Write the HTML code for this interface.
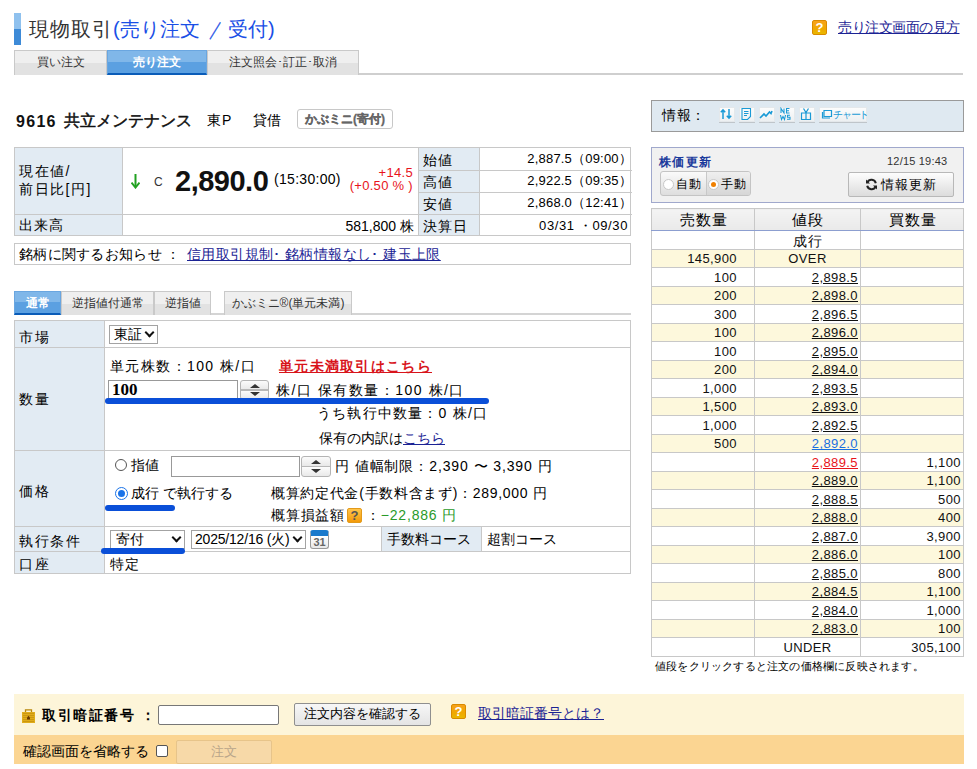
<!DOCTYPE html>
<html lang="ja"><head><meta charset="utf-8">
<style>
*{box-sizing:border-box}
html,body{margin:0;padding:0;background:#fff;width:977px;height:769px;overflow:hidden}
body{font-family:"Liberation Sans",sans-serif;font-size:13px;color:#000;position:relative}
.abs{position:absolute}
a{color:#1b2394;text-decoration:underline}
.titlebar{left:14px;top:13px;width:7px;height:32px;background:linear-gradient(#8fc1ee 0,#8fc1ee 50%,#3d8ad7 50%,#3d8ad7 100%)}
.title{left:29px;top:14px;font-size:20px;line-height:30px;color:#333;white-space:nowrap;letter-spacing:1px}
.title span{color:#1a4fe6}
.tabs{left:14px;top:50px;height:25px}
.tab{position:absolute;top:0;height:25px;border:1px solid #c9c9c9;border-bottom:none;background:linear-gradient(#efefef 0,#efefef 50%,#e2e2e2 50%,#e2e2e2 100%);font-size:12px;text-align:center;line-height:23px;color:#333}
.tabline{left:14px;top:73px;width:949px;height:2px;background:#cfcfcf}

.stock{left:16px;top:112px;font-size:16px;font-weight:bold;color:#111;white-space:nowrap;line-height:20px;letter-spacing:1.3px}
.stock.n{font-size:16px;letter-spacing:0;font-weight:normal;-webkit-text-stroke:0.5px #111;top:111px}
.mkt{left:207px;top:110px;font-size:14px;line-height:20px;letter-spacing:1px}
.kashi{left:253px;top:110px;font-size:14px;line-height:20px}
.badge{left:297px;top:109px;width:96px;height:20px;border:1px solid #c8c8c8;border-radius:3px;font-size:12px;font-weight:bold;color:#666;-webkit-text-stroke:0.3px #666;text-align:center;line-height:18px}
table{border-collapse:collapse}
.t1{left:14px;top:147px;width:617px;height:89px;border:1px solid #c8c8c8}
.hd{background:#e2ebf3}
.line{background:#c8c8c8}
.notice{left:14px;top:243px;width:617px;height:22px;border:1px solid #c8c8c8;font-size:14px;line-height:20px;padding-left:4px;white-space:nowrap}

.help{width:15px;height:15px;background:linear-gradient(#f7a21c,#f0a800 60%,#e9b800);border:1px solid #d98a00;border-radius:2px;color:#fff;font-weight:bold;font-size:13px;line-height:14px;text-align:center}
.otabs{left:14px;top:291px;height:24px}
.otab{position:absolute;top:0;height:24px;border:1px solid #c9c9c9;border-bottom:none;background:linear-gradient(#efefef 0,#efefef 50%,#e2e2e2 50%,#e2e2e2 100%);font-size:12px;text-align:center;line-height:23px;color:#333;white-space:nowrap}
.form{left:14px;top:320px;width:617px;height:254px;border:1px solid #c8c8c8}
.lab{position:absolute;left:4px;font-size:14px;line-height:16px;letter-spacing:1.5px}
.sel{position:absolute;border:1px solid #a3a3a3;background:#fff;font-size:13px;line-height:16px;padding-left:4px;white-space:nowrap}
.chev{position:absolute;right:4px;top:3px;width:7px;height:7px;border-right:2.5px solid #111;border-bottom:2.5px solid #111;transform:rotate(45deg)}
.spin{position:absolute;border:1px solid #b4b4b4;border-radius:3px;background:linear-gradient(#fbfbfb,#e9e9e9 45%,#b8b8b8 45%,#b8b8b8 55%,#fbfbfb 55%,#e9e9e9)}
.spin:before{content:"";position:absolute;left:50%;margin-left:-5px;top:3px;border-left:5px solid transparent;border-right:5px solid transparent;border-bottom:4px solid #333}
.spin:after{content:"";position:absolute;left:50%;margin-left:-5px;bottom:3px;border-left:5px solid transparent;border-right:5px solid transparent;border-top:4px solid #333}
.mark{position:absolute;height:6px;border-radius:3px;background:#0a4fd8}
.info{left:651px;top:100px;width:313px;height:32px;border:1px solid #9a9a9a;background:#dfe9f1}
.ib{position:absolute;top:6px;height:16px;border:none;border-bottom:1px solid #bfc5ca;background:linear-gradient(#fdfdfd,#eceff1);box-shadow:0 0 0 1px #e4e8eb inset}
.upd{left:651px;top:147px;width:313px;height:56px;border:1px solid #a0a8cc;background:#f1f1f1}
.board{left:651px;top:208px;width:312px}
.board table{width:312px;table-layout:fixed;border:1px solid #c8c8c8}
.board td{border:1px solid #c8c8c8;height:18.5px;padding:2px 2px 0;font-size:13px;line-height:14px;text-align:right;white-space:nowrap;letter-spacing:0.4px;color:#111}
.board th{border:1px solid #c8c8c8;border-bottom:1px solid #8c9ed0;height:22px;font-weight:normal;font-size:15px;letter-spacing:1px;background:linear-gradient(#f4f4f4,#e9e9e9);padding:0 0 0 1px;line-height:18px}
.board tr.y td{background:#fdf8dc}
.board td.p{color:#111}
.board td.p span{text-decoration:underline}
.board td.c{text-align:center}
.board td.s{padding-right:17px}
.band1{left:14px;top:694px;width:950px;height:41px;background:#fdf5d9}
.band2{left:14px;top:735px;width:950px;height:29px;background:#fbd592}
.btn{position:absolute;border:1px solid #8f8f8f;border-radius:2px;background:linear-gradient(#f7f7f7,#e4e4e4);font-size:13px;text-align:center;white-space:nowrap}
</style></head><body>
<div class="abs titlebar"></div>
<div class="abs title">現物取引<span style="letter-spacing:0">(売り注文</span></div><div class="abs title" style="left:209px;letter-spacing:0"><span style="display:inline-block;-webkit-text-stroke:0.4px #1a4fe6;transform:scaleX(0.68);transform-origin:0 0">／</span></div><div class="abs title" style="left:228px;letter-spacing:0"><span>受付<span style="margin-left:0px">)</span></span></div>
<div class="abs tabline"></div>
<div class="abs tabs">
 <div class="tab" style="left:0;width:93px">買い注文</div>
 <div class="tab" style="left:93px;width:100px;background:linear-gradient(#80b7e9 0,#80b7e9 50%,#5ba0e1 50%,#5ba0e1 100%);border-color:#6aa6e0;color:#fff;font-weight:bold;border-bottom:2px solid #0a5cb8">売り注文</div>
 <div class="tab" style="left:193px;width:152px">注文照会･訂正･取消</div>
</div>

<div class="abs stock">9616</div><div class="abs stock n" style="left:64px">共立メンテナンス</div>
<div class="abs mkt">東P</div>
<div class="abs kashi">貸借</div>
<div class="abs badge">かぶミニ(寄付)</div>
<div class="abs t1">
 <div class="abs hd" style="left:0;top:0;width:107px;height:66px"></div>
 <div class="abs hd" style="left:0;top:67px;width:107px;height:20px"></div>
 <div class="abs hd" style="left:404px;top:0;width:60px;height:87px"></div>
 <div class="abs line" style="left:107px;top:0;width:1px;height:87px"></div>
 <div class="abs line" style="left:403px;top:0;width:1px;height:87px"></div>
 <div class="abs line" style="left:464px;top:0;width:1px;height:87px"></div>
 <div class="abs line" style="left:0;top:66px;width:617px;height:1px"></div>
 <div class="abs line" style="left:404px;top:22px;width:213px;height:1px"></div>
 <div class="abs line" style="left:404px;top:44px;width:213px;height:1px"></div>
 <div class="abs" style="left:4px;top:14px;font-size:14px;line-height:18px;letter-spacing:1.5px">現在値/<br>前日比[円]</div>
 <div class="abs" style="left:4px;top:68px;font-size:14px;line-height:18px;letter-spacing:1px">出来高</div>
 <svg class="abs" style="left:116px;top:26px" width="9" height="15" viewBox="0 0 9 15"><path d="M4.5 0V13" stroke="#21a121" stroke-width="2"/><path d="M0.5 8.5L4.5 13.5L8.5 8.5" fill="none" stroke="#21a121" stroke-width="2"/></svg>
 <div class="abs" style="left:139px;top:27px;font-size:12px;line-height:14px;color:#333">C</div>
 <div class="abs" style="left:160px;top:15px;font-size:29px;font-weight:bold;color:#111;line-height:36px;letter-spacing:-0.5px">2,890.0</div>
 <div class="abs" style="left:259px;top:23px;font-size:14px;line-height:16px;letter-spacing:0.3px">(15:30:00)</div>
 <div class="abs" style="left:320px;top:18px;width:78px;text-align:right;font-size:13px;color:#e8141b;line-height:13px;letter-spacing:0.3px">+14.5<br>(+0.50 % )</div>
 <div class="abs" style="left:300px;top:69px;width:99px;text-align:right;font-size:14px;line-height:18px">581,800 株</div>
 <div class="abs" style="left:408px;top:4px;font-size:14px;line-height:16px;letter-spacing:1px">始値</div>
 <div class="abs" style="left:408px;top:26px;font-size:14px;line-height:16px;letter-spacing:1px">高値</div>
 <div class="abs" style="left:408px;top:48px;font-size:14px;line-height:16px;letter-spacing:1px">安値</div>
 <div class="abs" style="left:408px;top:70px;font-size:14px;line-height:16px;letter-spacing:1px">決算日</div>
 <div class="abs" style="left:470px;top:3px;width:147px;text-align:right;font-size:13px;line-height:16px;letter-spacing:0.2px">2,887.5（09:00）</div>
 <div class="abs" style="left:470px;top:25px;width:147px;text-align:right;font-size:13px;line-height:16px;letter-spacing:0.2px">2,922.5（09:35）</div>
 <div class="abs" style="left:470px;top:47px;width:147px;text-align:right;font-size:13px;line-height:16px;letter-spacing:0.2px">2,868.0（12:41）</div>
 <div class="abs" style="left:470px;top:70px;width:143px;text-align:right;font-size:13px;line-height:16px;letter-spacing:0.6px">03/31 ・09/30</div>
</div>
<div class="abs notice"><span style="letter-spacing:0.3px">銘柄に関するお知らせ ：</span><a href="#" style="position:absolute;left:172px;top:0;letter-spacing:0.4px">信用取引規制･ 銘柄情報なし･ 建玉上限</a></div>

<div class="abs help" style="left:812px;top:20px">?</div>
<div class="abs" style="left:838px;top:19px;font-size:14px;line-height:17px;white-space:nowrap;letter-spacing:-0.5px"><a href="#">売り注文画面の見方</a></div>

<div class="abs info">
 <div class="abs" style="left:10px;top:6px;font-size:14px;line-height:16px;letter-spacing:0.5px">情報：</div>
 <div class="ib" style="left:67px;width:16px"><svg width="14" height="14" viewBox="0 0 14 14" style="position:absolute;left:0;top:0"><path d="M4 12V3M1.8 5.2L4 2.8L6.2 5.2M10 2V11M7.8 8.8L10 11.2L12.2 8.8" fill="none" stroke="#1a9ad6" stroke-width="1.5"/></svg></div>
 <div class="ib" style="left:87px;width:16px"><svg width="14" height="14" viewBox="0 0 14 14" style="position:absolute;left:0;top:0"><path d="M3 1.5H11.5V9.5L8.5 12.5H3Z M5 4.5H9.5M5 6.5H9.5M5 8.5H8" fill="none" stroke="#1a9ad6" stroke-width="1.1"/></svg></div>
 <div class="ib" style="left:107px;width:16px"><svg width="14" height="14" viewBox="0 0 14 14" style="position:absolute;left:0;top:0"><path d="M1 11L5 7L7 9L10.5 5L12 6.5L13 4" fill="none" stroke="#1a9ad6" stroke-width="1.6"/></svg></div>
 <div class="ib" style="left:127px;width:16px"><svg width="14" height="14" viewBox="0 0 14 14" style="position:absolute;left:0;top:0"><path d="M2 6V1.5L5 6V1.5M10.5 1.5H7.5V6H10.5M7.5 3.8H10M1.5 8L2.5 12.5L4 9.5L5.5 12.5L6.5 8M11 8.3H8.5V10.2H11V12.3H8" fill="none" stroke="#1a9ad6" stroke-width="1.1"/></svg></div>
 <div class="ib" style="left:147px;width:16px"><svg width="14" height="14" viewBox="0 0 14 14" style="position:absolute;left:0;top:0"><path d="M2.5 6H11.5V12.5H2.5ZM7 6V12.5M4.5 1.5L7 5.5L9.5 1.5" fill="none" stroke="#1a9ad6" stroke-width="1.2"/></svg></div>
 <div class="ib" style="left:167px;width:48px;color:#1a9ad6;font-size:10px;text-align:left;padding-left:14px;line-height:15px;letter-spacing:-1.2px;white-space:nowrap;overflow:hidden"><svg width="12" height="12" viewBox="0 0 12 12" style="position:absolute;left:2px;top:1px"><path d="M3 2.5H10.5V8.5H3Z M1.5 4V10H9" fill="none" stroke="#1a9ad6" stroke-width="1.2"/></svg>チャート</div>
</div>

<div class="abs upd">
 <div class="abs" style="left:7px;top:7px;font-size:12px;font-weight:bold;color:#1b3a9c;line-height:14px;letter-spacing:1.4px">株価更新</div>
 <div class="abs" style="left:235px;top:7px;font-size:11px;color:#333;line-height:12px;letter-spacing:0.2px">12/15 19:43</div>
 <div class="abs" style="left:8px;top:23px;width:91px;height:25px;border:1px solid #c4c4c4;border-radius:3px;background:linear-gradient(#fafafa,#dedede);overflow:hidden"><div class="abs" style="left:45px;top:0;width:46px;height:25px;background:linear-gradient(#efefef,#d4d4d4);border-left:1px solid #c8c8c8"></div></div>
 <div class="abs" style="left:11px;top:31px;width:11px;height:11px;border:1px solid #c8c8c8;border-radius:50%;background:#fff"></div>
 <div class="abs" style="left:24px;top:29px;font-size:12px;line-height:14px;letter-spacing:0.5px">自動</div>
 <div class="abs" style="left:56px;top:31px;width:11px;height:11px;border:1px solid #c8c8c8;border-radius:50%;background:#fff"><div class="abs" style="left:2px;top:2px;width:5px;height:5px;border-radius:50%;background:#f08000"></div></div>
 <div class="abs" style="left:69px;top:29px;font-size:12px;line-height:14px;letter-spacing:0.5px">手動</div>
 <div class="btn" style="left:196px;top:24px;width:106px;height:25px;border-color:#b8b8b8;font-size:13px;line-height:23px;background:linear-gradient(#fdfdfd,#dcdcdc);letter-spacing:1px"><svg width="13" height="13" viewBox="0 0 13 13" style="vertical-align:-2px;margin-right:3px"><path d="M10.8 5.2A4.5 4.5 0 0 0 2.4 4.2M2.2 7.8A4.5 4.5 0 0 0 10.6 8.8" fill="none" stroke="#222" stroke-width="2"/><path d="M1 1.5V5.6H5Z M12 11.5V7.4H8Z" fill="#222"/></svg>情報更新</div>
</div>

<div class="abs board"><table>
<colgroup><col style="width:103px"><col style="width:106px"><col style="width:103px"></colgroup>
<tr><th>売数量</th><th>値段</th><th>買数量</th></tr>
<tr><td></td><td class="c" style="font-size:14px;letter-spacing:1px">成行</td><td></td></tr>
<tr class="y"><td class="s">145,900</td><td class="c">OVER</td><td></td></tr>
<tr><td class="s">100</td><td class="p"><span>2,898.5</span></td><td></td></tr>
<tr class="y"><td class="s">200</td><td class="p"><span>2,898.0</span></td><td></td></tr>
<tr><td class="s">300</td><td class="p"><span>2,896.5</span></td><td></td></tr>
<tr class="y"><td class="s">100</td><td class="p"><span>2,896.0</span></td><td></td></tr>
<tr><td class="s">100</td><td class="p"><span>2,895.0</span></td><td></td></tr>
<tr class="y"><td class="s">200</td><td class="p"><span>2,894.0</span></td><td></td></tr>
<tr><td class="s">1,000</td><td class="p"><span>2,893.5</span></td><td></td></tr>
<tr class="y"><td class="s">1,500</td><td class="p"><span>2,893.0</span></td><td></td></tr>
<tr><td class="s">1,000</td><td class="p"><span>2,892.5</span></td><td></td></tr>
<tr class="y"><td class="s">500</td><td class="p"><span style="color:#1a6fe0">2,892.0</span></td><td></td></tr>
<tr><td></td><td class="p"><span style="color:#e8141b">2,889.5</span></td><td>1,100</td></tr>
<tr class="y"><td></td><td class="p"><span>2,889.0</span></td><td>1,100</td></tr>
<tr><td></td><td class="p"><span>2,888.5</span></td><td>500</td></tr>
<tr class="y"><td></td><td class="p"><span>2,888.0</span></td><td>400</td></tr>
<tr><td></td><td class="p"><span>2,887.0</span></td><td>3,900</td></tr>
<tr class="y"><td></td><td class="p"><span>2,886.0</span></td><td>100</td></tr>
<tr><td></td><td class="p"><span>2,885.0</span></td><td>800</td></tr>
<tr class="y"><td></td><td class="p"><span>2,884.5</span></td><td>1,100</td></tr>
<tr><td></td><td class="p"><span>2,884.0</span></td><td>1,000</td></tr>
<tr class="y"><td></td><td class="p"><span>2,883.0</span></td><td>100</td></tr>
<tr><td></td><td class="c">UNDER</td><td>305,100</td></tr>
</table>
<div style="font-size:11px;line-height:16px;padding-left:4px;margin-top:1px;letter-spacing:0.2px">値段をクリックすると注文の価格欄に反映されます。</div>
</div>

<div class="abs" style="left:14px;top:313px;width:617px;height:2px;background:#d4d4d4"></div>
<div class="abs otabs">
 <div class="otab" style="left:0;width:47px;background:linear-gradient(#80b7e9 0,#80b7e9 50%,#5ba0e1 50%,#5ba0e1 100%);border-color:#6aa6e0;color:#fff;font-weight:bold;border-bottom:2px solid #0a5cb8">通常</div>
 <div class="otab" style="left:47px;width:93px">逆指値付通常</div>
 <div class="otab" style="left:140px;width:57px">逆指値</div>
 <div class="otab" style="left:210px;width:128px">かぶミニ®(単元未満)</div>
</div>

<div class="abs form">
 <div class="abs hd" style="left:0;top:0;width:89px;height:252px"></div>
 <div class="abs line" style="left:89px;top:0;width:1px;height:252px"></div>
 <div class="abs line" style="left:0;top:26px;width:615px;height:1px"></div>
 <div class="abs line" style="left:0;top:129px;width:615px;height:1px"></div>
 <div class="abs line" style="left:0;top:205px;width:615px;height:1px"></div>
 <div class="abs line" style="left:0;top:230px;width:615px;height:1px"></div>
 <div class="abs hd" style="left:367px;top:206px;width:99px;height:24px"></div>
 <div class="abs line" style="left:366px;top:206px;width:1px;height:24px"></div>
 <div class="abs line" style="left:466px;top:206px;width:1px;height:24px"></div>
 <div class="lab" style="top:8px">市場</div>
 <div class="lab" style="top:70px">数量</div>
 <div class="lab" style="top:162px">価格</div>
 <div class="lab" style="top:212px">執行条件</div>
 <div class="lab" style="top:235px">口座</div>

 <div class="sel" style="left:94px;top:4px;width:49px;height:19px;font-size:14px">東証<div class="chev"></div></div>
 <div class="abs" style="left:95px;top:37px;font-size:14px;line-height:16px;white-space:nowrap;letter-spacing:1.4px">単元株数：100 株/口</div>
 <div class="abs" style="left:264px;top:37px;font-size:14px;line-height:16px;font-weight:bold;color:#d8141b;text-decoration:underline;white-space:nowrap;letter-spacing:1.3px">単元未満取引はこちら</div>
 <div class="abs" style="left:93px;top:59px;width:130px;height:20px;border:1px solid #999;background:#fff;font-family:'Liberation Serif',serif;font-weight:bold;font-size:17px;line-height:18px;padding-left:3px">100</div>
 <div class="spin" style="left:225px;top:59px;width:29px;height:20px"></div>
 <div class="abs" style="left:261px;top:61px;font-size:14px;line-height:16px;white-space:nowrap;letter-spacing:1.5px">株/口 保有数量：100 株/口</div>
 <div class="mark" style="left:90px;top:77px;width:384px"></div>
 <div class="abs" style="left:302px;top:84px;font-size:14px;line-height:16px;white-space:nowrap;letter-spacing:1.2px">うち執行中数量：0 株/口</div>
 <div class="abs" style="left:304px;top:109px;font-size:14px;line-height:16px;white-space:nowrap">保有の内訳は<a href="#">こちら</a></div>

 <div class="abs" style="left:100px;top:138px;width:12px;height:12px;border:1px solid #555;border-radius:50%;background:#fff"></div>
 <div class="abs" style="left:116px;top:136px;font-size:14px;line-height:16px">指値</div>
 <div class="abs" style="left:156px;top:135px;width:129px;height:21px;border:1px solid #999;background:#fff"></div>
 <div class="spin" style="left:286px;top:135px;width:30px;height:21px"></div>
 <div class="abs" style="left:320px;top:137px;font-size:14px;line-height:16px;white-space:nowrap;letter-spacing:0.9px">円&nbsp;値幅制限：2,390 〜 3,390 円</div>
 <div class="abs" style="left:100px;top:166px;width:13px;height:13px;border:1px solid #1a73e8;border-radius:50%;background:#fff"><div class="abs" style="left:2px;top:2px;width:7px;height:7px;border-radius:50%;background:#1a73e8"></div></div>
 <div class="abs" style="left:116px;top:164px;font-size:14px;line-height:16px;white-space:nowrap">成行 で執行する</div>
 <div class="mark" style="left:90px;top:184px;width:70px"></div>
 <div class="abs" style="left:256px;top:164px;font-size:14px;line-height:16px;white-space:nowrap;letter-spacing:0.7px">概算約定代金(手数料含まず)：289,000 円</div>
 <div class="abs" style="left:256px;top:186px;font-size:14px;line-height:16px;white-space:nowrap;letter-spacing:0.8px">概算損益額<span class="help" style="display:inline-block;vertical-align:0px;letter-spacing:0;margin-left:2px;margin-right:4px;color:#555;background:linear-gradient(#ffc54a,#f39a0a);border-color:#e39a1a">?</span>：<span style="color:#2a9a2a">−22,886 円</span></div>

 <div class="sel" style="left:95px;top:209px;width:75px;height:19px;font-size:14px;padding-left:5px">寄付<div class="chev"></div></div>
 <div class="sel" style="left:176px;top:209px;width:115px;height:19px;font-size:14px;padding-left:3px;letter-spacing:-0.2px">2025/12/16 (火)<div class="chev"></div></div>
 <div class="abs" style="left:295px;top:209px;width:19px;height:19px;border:1px solid #999;border-radius:3px;background:linear-gradient(#fff,#e8e8e8);border-top:6px solid #1a7acc;font-size:11px;font-weight:bold;color:#666;text-align:center;line-height:12px">31</div>
 <div class="mark" style="left:86px;top:227px;width:84px"></div>
 <div class="abs" style="left:372px;top:210px;font-size:14px;line-height:16px">手数料コース</div>
 <div class="abs" style="left:472px;top:210px;font-size:14px;line-height:16px">超割コース</div>
 <div class="abs" style="left:95px;top:235px;font-size:14px;line-height:16px;letter-spacing:1px">特定</div>
</div>

<div class="abs band1"></div>
<div class="abs band2"></div>
<svg class="abs" style="left:22px;top:709px" width="13" height="15" viewBox="0 0 13 15"><path d="M3.5 3.5V0.8H9.5V3.5" fill="none" stroke="#b8860b" stroke-width="1.3"/><rect x="0" y="3" width="13" height="11" fill="#e0ac1a"/><path d="M1 4.5H12M1 6.5H12M1 8.5H12M1 10.5H12M1 12.5H12" stroke="#c7920c" stroke-width="0.8"/><path d="M6.5 6.8L8 8.6V10.6H5V8.6Z" fill="#6a3a00"/></svg>
<div class="abs" style="left:42px;top:707px;font-size:14px;font-weight:bold;line-height:16px;white-space:nowrap;letter-spacing:1.6px">取引暗証番号 ：</div>
<div class="abs" style="left:158px;top:705px;width:121px;height:20px;border:1px solid #777;border-radius:2px;background:#fff"></div>
<div class="btn" style="left:294px;top:703px;width:137px;height:23px;line-height:20px">注文内容を確認する</div>
<div class="abs help" style="left:451px;top:704px">?</div>
<div class="abs" style="left:478px;top:705px;font-size:14px;line-height:17px;white-space:nowrap"><a href="#">取引暗証番号とは？</a></div>
<div class="abs" style="left:23px;top:743px;font-size:14px;line-height:16px;white-space:nowrap">確認画面を省略する</div>
<div class="abs" style="left:156px;top:745px;width:12px;height:12px;border:1px solid #555;border-radius:2px;background:#fff"></div>
<div class="abs" style="left:176px;top:740px;width:96px;height:24px;border:1px solid #e7c48a;border-radius:2px;background:#f7d9a8;color:#b9a58a;font-size:13px;text-align:center;line-height:22px">注文</div>
</body></html>
